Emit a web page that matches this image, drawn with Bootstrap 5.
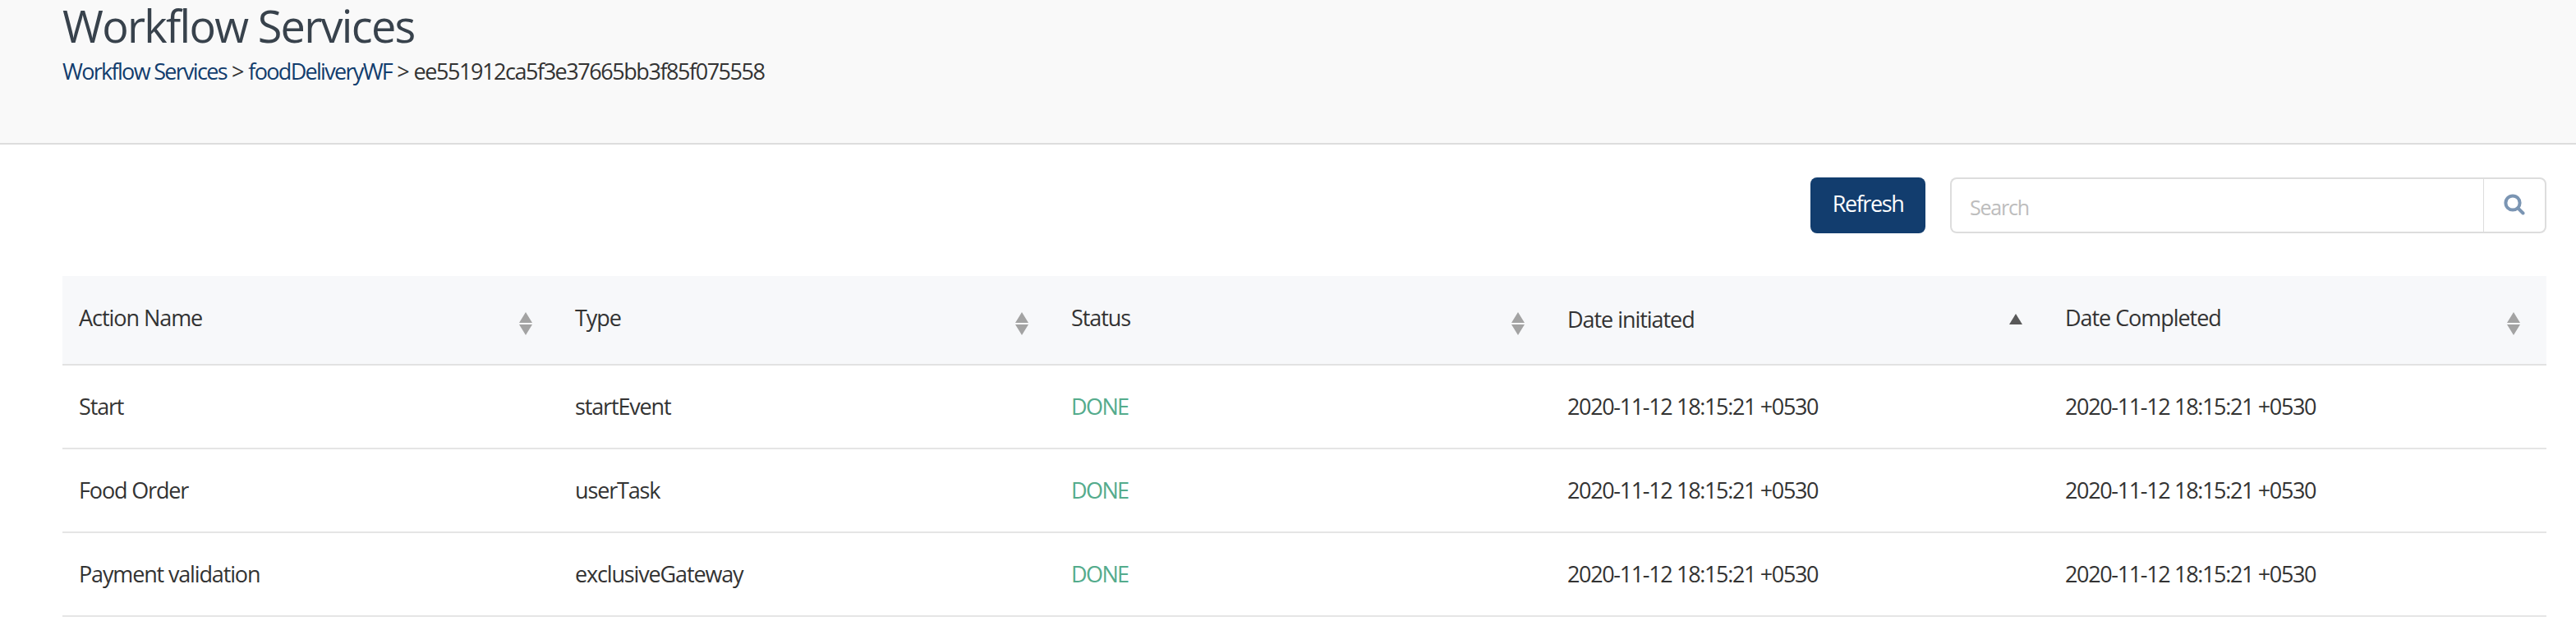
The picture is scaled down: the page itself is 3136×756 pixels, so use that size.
<!DOCTYPE html>
<html lang="en">
<head>
<meta charset="utf-8">
<title>Workflow Services</title>
<link rel="stylesheet" href="https://cdn.jsdelivr.net/npm/bootstrap@5.3.0/dist/css/bootstrap.min.css">
<style>
html,body{height:756px;overflow:hidden;background:#fff}
body{font-family:"Open Sans","Liberation Sans",sans-serif;color:#333;font-size:27px;letter-spacing:-1.4px}
.wf-head{height:176px;background:#f9f9f9;border-bottom:2px solid #ddd;padding:0 36px 0 76px}
.wf-title{font-size:54px;font-weight:400;line-height:62px;margin:0;color:#38424c;letter-spacing:-1.7px}
.wf-crumbs{font-size:27px;line-height:36px;margin-top:7px;color:#333;letter-spacing:-1.45px;word-spacing:.7px}
.wf-crumbs a{color:#123d6e;text-decoration:none;letter-spacing:-1.7px;word-spacing:0}
.wf-body{padding:40px 36px 0 76px}
.wf-tools{height:68px;gap:30px;margin-bottom:52px}
.wf-refresh{width:140px;height:68px;background:#123d6e;border:0;border-radius:8px;color:#fff;font-size:27px;letter-spacing:-1.4px;padding:0 0 4px}
.wf-refresh:hover{background:#123d6e;color:#fff}
.wf-search{width:726px;height:68px}
.wf-search .form-control{height:68px;border:2px solid #ddd;border-right:0;border-radius:8px 0 0 8px;font-size:25px;letter-spacing:-1.2px;padding:4px 22px 0;box-shadow:none}
.wf-search .form-control::placeholder{color:#bdbdbd}
.wf-search .input-group-text{width:78px;height:68px;background:#fff;border:2px solid #ddd;border-radius:0 8px 8px 0;justify-content:center;padding:0 0 2px}
.wf-table{table-layout:fixed;width:100%;margin:0;--bs-table-color:#333}
.wf-table th{height:108px;background:#f7f8fa;font-weight:400;padding:0 20px 4px;border-bottom:2px solid #e2e2e2;position:relative;vertical-align:middle;font-size:27px;letter-spacing:-1.05px}
.wf-table th.wf-lower{padding-bottom:0}
.wf-table td{height:102px;padding:0 20px;border-bottom:2px solid #e5e5e5;vertical-align:middle;letter-spacing:-1.15px}
.wf-table td.wf-date{letter-spacing:-1.35px}
.wf-table td.wf-done{color:#54ab8c;letter-spacing:-1.6px}
.wf-sort{position:absolute;right:32px;top:50%;width:16px;height:30px;margin-top:-11px}
.wf-lower .wf-sort{margin-top:-9px}
</style>
</head>
<body>
<header class="wf-head">
  <h1 class="wf-title">Workflow Services</h1>
  <div class="wf-crumbs"><a href="#">Workflow Services</a> &gt; <a href="#">foodDeliveryWF</a> &gt; ee551912ca5f3e37665bb3f85f075558</div>
</header>
<main class="wf-body">
  <div class="wf-tools d-flex justify-content-end align-items-center">
    <button type="button" class="btn wf-refresh">Refresh</button>
    <div class="input-group wf-search flex-nowrap">
      <input type="text" class="form-control" placeholder="Search">
      <span class="input-group-text"><svg width="26" height="26" viewBox="0 0 26 26" fill="none" stroke="#7b95b3" stroke-width="4" stroke-linecap="round"><circle cx="11" cy="11" r="8.6"/><path d="M17.5 17.5L23.5 23.5"/></svg></span>
    </div>
  </div>
  <table class="table wf-table">
    <thead>
      <tr>
        <th style="width:604px">Action Name<svg class="wf-sort" viewBox="0 0 16 30"><path d="M8 1L16 14H0Z M0 16H16L8 29Z" fill="#a3a3a3"/></svg></th>
        <th style="width:604px">Type<svg class="wf-sort" viewBox="0 0 16 30"><path d="M8 1L16 14H0Z M0 16H16L8 29Z" fill="#a3a3a3"/></svg></th>
        <th style="width:604px">Status<svg class="wf-sort" viewBox="0 0 16 30"><path d="M8 1L16 14H0Z M0 16H16L8 29Z" fill="#a3a3a3"/></svg></th>
        <th class="wf-lower" style="width:606px">Date initiated<svg class="wf-sort" viewBox="0 0 16 30"><path d="M8 1L16 14H0Z" fill="#595959"/></svg></th>
        <th>Date Completed<svg class="wf-sort" viewBox="0 0 16 30"><path d="M8 1L16 14H0Z M0 16H16L8 29Z" fill="#a3a3a3"/></svg></th>
      </tr>
    </thead>
    <tbody>
      <tr><td>Start</td><td>startEvent</td><td class="wf-done">DONE</td><td class="wf-date">2020-11-12 18:15:21 +0530</td><td class="wf-date">2020-11-12 18:15:21 +0530</td></tr>
      <tr><td>Food Order</td><td>userTask</td><td class="wf-done">DONE</td><td class="wf-date">2020-11-12 18:15:21 +0530</td><td class="wf-date">2020-11-12 18:15:21 +0530</td></tr>
      <tr><td>Payment validation</td><td>exclusiveGateway</td><td class="wf-done">DONE</td><td class="wf-date">2020-11-12 18:15:21 +0530</td><td class="wf-date">2020-11-12 18:15:21 +0530</td></tr>
    </tbody>
  </table>
</main>
</body>
</html>
